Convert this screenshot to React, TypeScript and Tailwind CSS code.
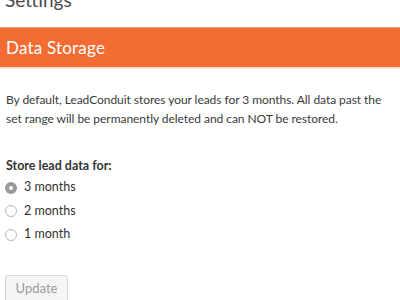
export default function App() {
  const options = [
    { value: '3', label: '3 months', checked: true },
    { value: '2', label: '2 months', checked: false },
    { value: '1', label: '1 month', checked: false },
  ]

  return (
    <div className="w-[400px] h-[300px] overflow-hidden bg-white font-['Lato',sans-serif]">
      <h1 className="mt-[-13px] h-[40px] px-[5px] text-[19px] leading-[26px] text-[#4a4a4a]">Settings</h1>
      <div className="h-[42px] bg-[#f26c33] border-t border-[#f59a72] border-b-2 border-b-[#fde3d6] flex items-center px-[6px]">
        <span className="text-[17px] text-white tracking-[0.2px]">Data Storage</span>
      </div>
      <p className="mt-[21px] pl-[6px] text-[12px] leading-[19px] tracking-[-0.05px] whitespace-nowrap text-[#3a3a3a]">
        By default, LeadConduit stores your leads for 3 months. All data past the
        <br />
        set range will be permanently deleted and can NOT be restored.
      </p>
      <div className="mt-[29px] px-[6px] text-[12.5px] font-bold text-[#333]">Store lead data for:</div>
      <div className="mt-[3px] flex flex-col gap-[5.5px] px-[5px]">
        {options.map((o) => (
          <label key={o.value} className="flex items-center gap-[7px] h-[18px] text-[12.5px] text-[#333]">
            {o.checked ? (
              <span className="w-[12px] h-[12px] rounded-full bg-[#9a9a9a] flex items-center justify-center">
                <span className="w-[4px] h-[4px] rounded-full bg-white" />
              </span>
            ) : (
              <span className="w-[12px] h-[12px] rounded-full border border-[#b5b5b5] bg-white" />
            )}
            {o.label}
          </label>
        ))}
      </div>
      <button className="mt-[31px] ml-[5px] w-[63px] h-[28px] rounded-[3px] border border-[#d6d6d6] bg-[#f5f5f5] text-[13px] text-[#9b9b9b]">
        Update
      </button>
    </div>
  )
}
